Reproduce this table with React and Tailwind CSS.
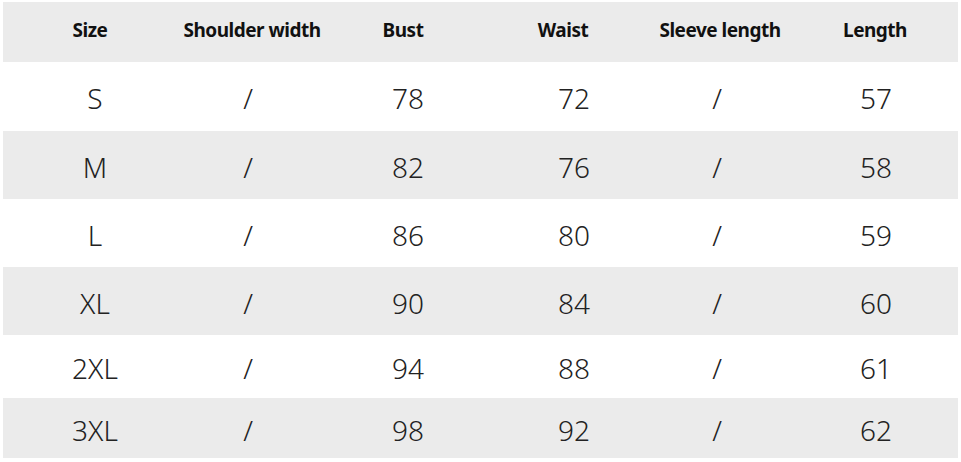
import React from "react";

const headers = ["Size", "Shoulder width", "Bust", "Waist", "Sleeve length", "Length"];

const rows = [
  { size: "S", bust: "78", waist: "72", length: "57", h: "h-[69px]", bg: "bg-white" },
  { size: "M", bust: "82", waist: "76", length: "58", h: "h-[68px]", bg: "bg-[#ebebeb]" },
  { size: "L", bust: "86", waist: "80", length: "59", h: "h-[68px]", bg: "bg-white" },
  { size: "XL", bust: "90", waist: "84", length: "60", h: "h-[68px]", bg: "bg-[#ebebeb]" },
  { size: "2XL", bust: "94", waist: "88", length: "61", h: "h-[63px]", bg: "bg-white" },
  { size: "3XL", bust: "98", waist: "92", length: "62", h: "h-[60px]", bg: "bg-[#ebebeb]" },
];

const cols = "grid grid-cols-[174px_150px_152px_168px_146px_164px]";

const App = () => {
  return (
    <div className="w-[961px] h-[462px] bg-white pt-[2px] px-[3px] overflow-hidden">
      {/* Header */}
      <div className={`${cols} h-[60px] bg-[#ebebeb] items-center`}>
        {headers.map((h, i) => (
          <div
            key={i}
            className="text-center text-[19px] font-bold tracking-[-0.5px] text-[#111] pb-[3px] font-['Noto_Sans',sans-serif]"
          >
            {h}
          </div>
        ))}
      </div>

      {/* Rows */}
      {rows.map((r, i) => (
        <div
          key={i}
          className={`${cols} ${r.h} ${r.bg} items-center pt-[3px] text-[28px] font-light text-[#222] font-['Noto_Sans','Open_Sans',sans-serif]`}
        >
          <div className="text-center pl-[10px]">{r.size}</div>
          <div className="text-center pr-[8px]">/</div>
          <div className="text-center pl-[10px]">{r.bust}</div>
          <div className="text-center pl-[22px]">{r.waist}</div>
          <div className="text-center pr-[6px]">/</div>
          <div className="text-center pl-[2px]">{r.length}</div>
        </div>
      ))}
    </div>
  );
};

export default App;
